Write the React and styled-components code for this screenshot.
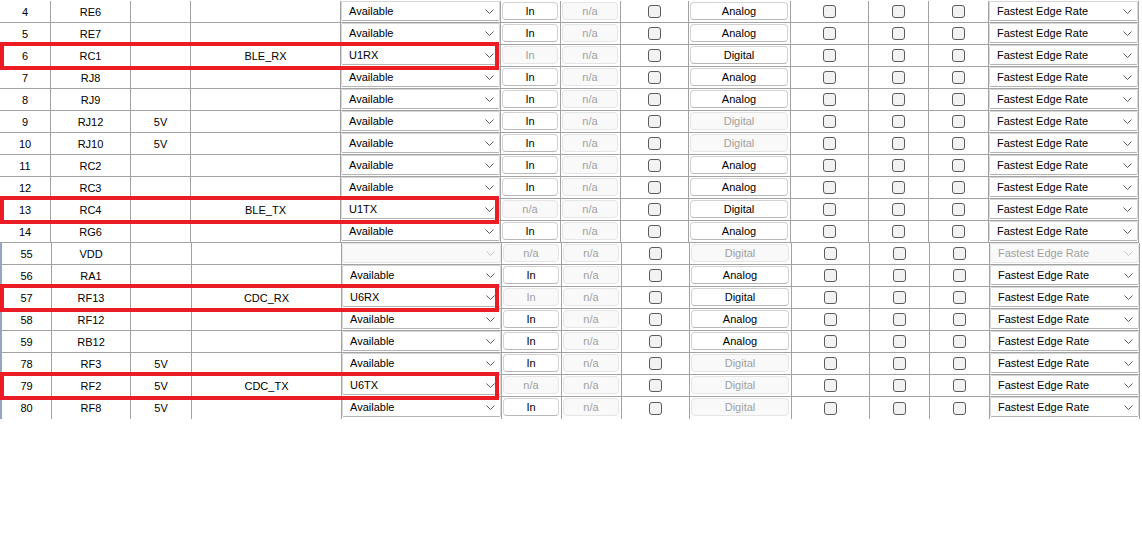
import React from "react";
import styled, { createGlobalStyle, css } from "styled-components";

const Global = createGlobalStyle`
  body {
    margin: 0;
    background: #fff;
    font-family: "Liberation Sans", Arial, sans-serif;
    font-size: 11px;
    color: #000;
  }
`;

const COLS_A = "51px 80px 60px 150px 160px 60px 60px 68px 102px 78px 60px 60px 150px";
const COLS_B = "50px 79px 61px 150px 160px 60px 60px 68px 102px 78px 60px 60px 150px";

const Page = styled.div`
  width: 1142px;
  height: 550px;
  overflow: hidden;
  padding-top: 1px;
  box-sizing: border-box;
`;

const Section = styled.div`
  display: flex;
  flex-direction: column;
  width: max-content;
  ${(p) =>
    p.$edge &&
    css`
      border-left: 2px solid #95a4c0;
    `}
`;

const Row = styled.div`
  position: relative;
  display: grid;
  grid-template-columns: ${(p) => p.$cols};
  height: 22px;
`;

const Cell = styled.div`
  box-sizing: border-box;
  display: flex;
  align-items: center;
  justify-content: center;
  border-right: 1px solid #a3a3a3;
  border-bottom: ${(p) => (p.$last ? "none" : "1px solid #a3a3a3")};
  white-space: nowrap;
  overflow: hidden;
`;

const Combo = styled.div`
  box-sizing: border-box;
  display: flex;
  align-items: center;
  justify-content: space-between;
  width: 100%;
  height: 20px;
  padding: 0 5px 0 7px;
  background: ${(p) => (p.$off ? "#f9f9f9" : "#fff")};
  border: 1px solid ${(p) => (p.$off ? "#e6e6e6" : "#d6d6d6")};
  border-bottom-color: ${(p) => (p.$off ? "#e6e6e6" : "#b4b4b4")};
  border-radius: 2px;
  color: ${(p) => (p.$off ? "#a0a0a0" : "#000")};
  align-self: flex-start;
`;

const Btn = styled.div`
  box-sizing: border-box;
  display: flex;
  align-items: center;
  justify-content: center;
  align-self: flex-start;
  width: calc(100% - 3px);
  height: 18px;
  margin: 1px 2px 0 1px;
  border-radius: 4px;
  background: ${(p) => (p.$off ? "#f9f9f9" : "#fff")};
  border: 1px solid ${(p) => (p.$off ? "#e5e5e5" : "#d2d2d2")};
  border-bottom-color: ${(p) => (p.$off ? "#e5e5e5" : "#b8b8b8")};
  color: ${(p) => (p.$off ? "#a0a0a0" : "#000")};
`;

const Check = styled.span`
  box-sizing: border-box;
  width: 13px;
  height: 13px;
  border: 1px solid #5c5c5c;
  border-radius: 3px;
  background: #f2f2f2;
`;

const Mark = styled.div`
  position: absolute;
  z-index: 2;
  left: ${(p) => p.$left}px;
  top: -3px;
  width: ${(p) => p.$w}px;
  height: 28px;
  box-sizing: border-box;
  border: 4px solid #ec1c24;
  pointer-events: none;
`;

function Chevron({ off }) {
  return (
    <svg width="9" height="5" viewBox="0 0 9 5">
      <path d="M0.5 0.5 L4.5 4.5 L8.5 0.5" fill="none" stroke={off ? "#c4c4c4" : "#5a5a5a"} strokeWidth="1" />
    </svg>
  );
}

function Select({ value, off }) {
  return (
    <Combo $off={off}>
      <span>{value}</span>
      <Chevron off={off} />
    </Combo>
  );
}

const top = [
  { n: 4, pin: "RE6", fn: "Available", dir: "In", mode: "Analog" },
  { n: 5, pin: "RE7", fn: "Available", dir: "In", mode: "Analog" },
  { n: 6, pin: "RC1", name: "BLE_RX", fn: "U1RX", dir: "In", dirOff: true, mode: "Digital", mark: true },
  { n: 7, pin: "RJ8", fn: "Available", dir: "In", mode: "Analog" },
  { n: 8, pin: "RJ9", fn: "Available", dir: "In", mode: "Analog" },
  { n: 9, pin: "RJ12", v: "5V", fn: "Available", dir: "In", mode: "Digital", modeOff: true },
  { n: 10, pin: "RJ10", v: "5V", fn: "Available", dir: "In", mode: "Digital", modeOff: true },
  { n: 11, pin: "RC2", fn: "Available", dir: "In", mode: "Analog" },
  { n: 12, pin: "RC3", fn: "Available", dir: "In", mode: "Analog" },
  { n: 13, pin: "RC4", name: "BLE_TX", fn: "U1TX", dir: "n/a", dirOff: true, mode: "Digital", mark: true },
  { n: 14, pin: "RG6", fn: "Available", dir: "In", mode: "Analog" },
];

const bottom = [
  { n: 55, pin: "VDD", fn: "", fnOff: true, dir: "n/a", dirOff: true, mode: "Digital", modeOff: true, rateOff: true },
  { n: 56, pin: "RA1", fn: "Available", dir: "In", mode: "Analog" },
  { n: 57, pin: "RF13", name: "CDC_RX", fn: "U6RX", dir: "In", dirOff: true, mode: "Digital", mark: true },
  { n: 58, pin: "RF12", fn: "Available", dir: "In", mode: "Analog" },
  { n: 59, pin: "RB12", fn: "Available", dir: "In", mode: "Analog" },
  { n: 78, pin: "RF3", v: "5V", fn: "Available", dir: "In", mode: "Digital", modeOff: true },
  { n: 79, pin: "RF2", v: "5V", name: "CDC_TX", fn: "U6TX", dir: "n/a", dirOff: true, mode: "Digital", modeOff: true, mark: true },
  { n: 80, pin: "RF8", v: "5V", fn: "Available", dir: "In", mode: "Digital", modeOff: true },
];

function PinRow({ r, cols, last, shift }) {
  return (
    <Row $cols={cols}>
      <Cell $last={last}>{r.n}</Cell>
      <Cell $last={last}>{r.pin}</Cell>
      <Cell $last={last}>{r.v}</Cell>
      <Cell $last={last}>{r.name}</Cell>
      <Cell $last={last}>
        <Select value={r.fn} off={r.fnOff} />
      </Cell>
      <Cell $last={last}>
        <Btn $off={r.dirOff}>{r.dir}</Btn>
      </Cell>
      <Cell $last={last}>
        <Btn $off>n/a</Btn>
      </Cell>
      <Cell $last={last}>
        <Check />
      </Cell>
      <Cell $last={last}>
        <Btn $off={r.modeOff}>{r.mode}</Btn>
      </Cell>
      <Cell $last={last}>
        <Check />
      </Cell>
      <Cell $last={last}>
        <Check />
      </Cell>
      <Cell $last={last}>
        <Check />
      </Cell>
      <Cell $last={last}>
        <Select value="Fastest Edge Rate" off={r.rateOff} />
      </Cell>
      {r.mark && <Mark $left={-shift} $w={499} />}
    </Row>
  );
}

export default function App() {
  return (
    <>
      <Global />
      <Page>
        <Section>
          {top.map((r) => (
            <PinRow key={r.n} r={r} cols={COLS_A} shift={0} />
          ))}
        </Section>
        <Section $edge>
          {bottom.map((r, i) => (
            <PinRow key={r.n} r={r} cols={COLS_B} shift={2} last={i === bottom.length - 1} />
          ))}
        </Section>
      </Page>
    </>
  );
}
